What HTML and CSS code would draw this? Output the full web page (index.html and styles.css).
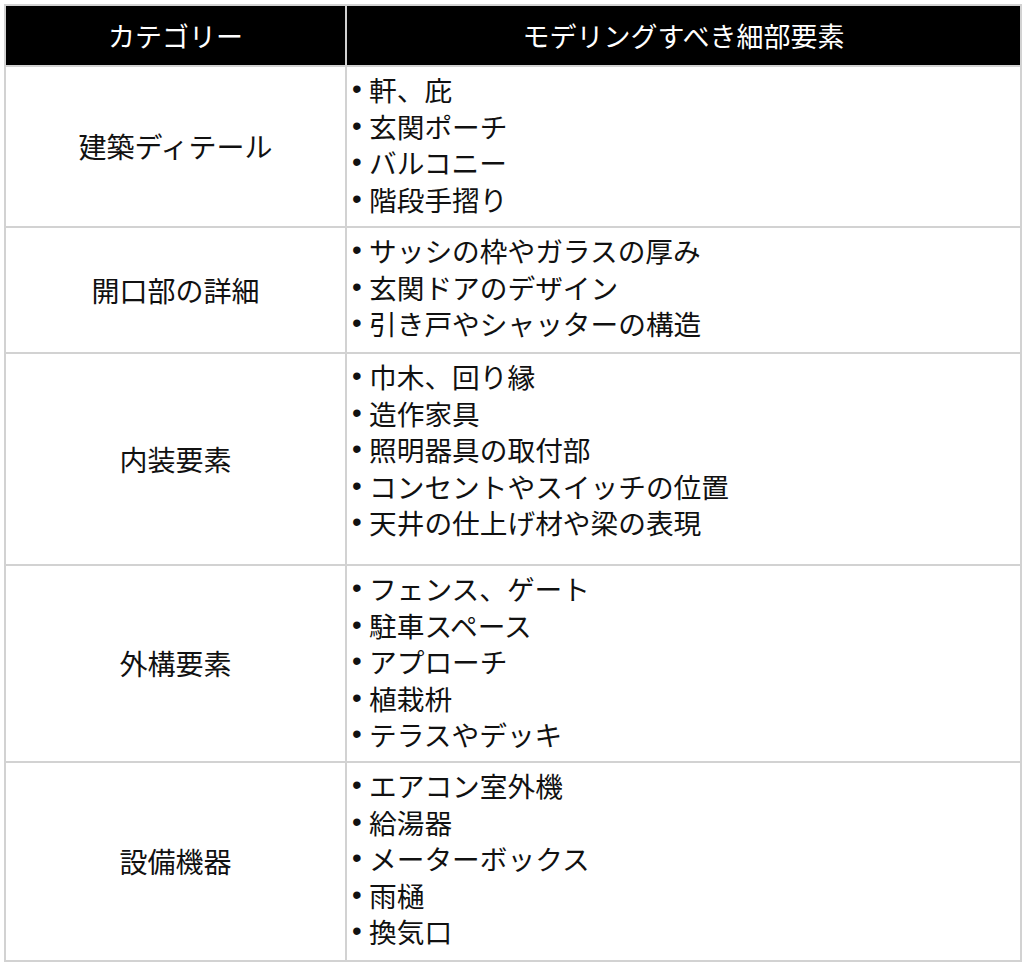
FILE: index.html
```html
<!DOCTYPE html>
<html lang="ja">
<head>
<meta charset="utf-8">
<link rel="stylesheet" href="styles.css">
</head>
<body>
<table class="detail-table">
  <thead>
    <tr>
      <th class="col-cat">カテゴリー</th>
      <th class="col-items">モデリングすべき細部要素</th>
    </tr>
  </thead>
  <tbody>
    <tr class="row row-a">
      <td class="cat">建築ディテール</td>
      <td class="items"><ul><li>軒、庇</li><li>玄関ポーチ</li><li>バルコニー</li><li>階段手摺り</li></ul></td>
    </tr>
    <tr class="row">
      <td class="cat">開口部の詳細</td>
      <td class="items"><ul><li>サッシの枠やガラスの厚み</li><li>玄関ドアのデザイン</li><li>引き戸やシャッターの構造</li></ul></td>
    </tr>
    <tr class="row row-c">
      <td class="cat">内装要素</td>
      <td class="items"><ul><li>巾木、回り縁</li><li>造作家具</li><li>照明器具の取付部</li><li>コンセントやスイッチの位置</li><li>天井の仕上げ材や梁の表現</li></ul></td>
    </tr>
    <tr class="row row-d">
      <td class="cat">外構要素</td>
      <td class="items"><ul><li>フェンス、ゲート</li><li>駐車スペース</li><li>アプローチ</li><li>植栽枡</li><li>テラスやデッキ</li></ul></td>
    </tr>
    <tr class="row">
      <td class="cat">設備機器</td>
      <td class="items"><ul><li>エアコン室外機</li><li>給湯器</li><li>メーターボックス</li><li>雨樋</li><li>換気口</li></ul></td>
    </tr>
  </tbody>
</table>
</body>
</html>
```

FILE: styles.css
```css
html, body {
  margin: 0;
  padding: 0;
  background: #ffffff;
}

body {
  font-family: "Noto Sans CJK JP", "Noto Sans", sans-serif;
  color: #111111;
}

.detail-table {
  margin: 4px;
  width: 1018px;
  border-collapse: collapse;
  table-layout: fixed;
  border: 2px solid #d2d2d2;
}

.detail-table th,
.detail-table td {
  border: 2px solid #d2d2d2;
}

.col-cat {
  width: 339px;
}

.detail-table th {
  background: #000000;
  color: #ffffff;
  font-weight: 400;
  font-size: 27px;
  line-height: 36px;
  height: 59px;
  padding: 0;
  text-align: center;
  vertical-align: middle;
}

.cat {
  font-size: 28px;
  line-height: 36.5px;
  text-align: center;
  vertical-align: middle;
  padding: 0 8px;
}

.items {
  vertical-align: top;
  padding: 4px 4px 10.5px 5px;
}

.row-a .items {
  padding-bottom: 9px;
}

.row-c .items {
  padding-bottom: 23.5px;
}

.row-d .items {
  padding-bottom: 8.5px;
}

.items ul {
  list-style: none;
  margin: 0;
  padding: 0;
}

.items li {
  display: flex;
  font-size: 27.7px;
  line-height: 36.5px;
  height: 36.5px;
  white-space: nowrap;
}

.items li::before {
  content: "\2022";
  font-family: "Liberation Sans", sans-serif;
  flex: 0 0 17px;
  line-height: 36.5px;
}
```
